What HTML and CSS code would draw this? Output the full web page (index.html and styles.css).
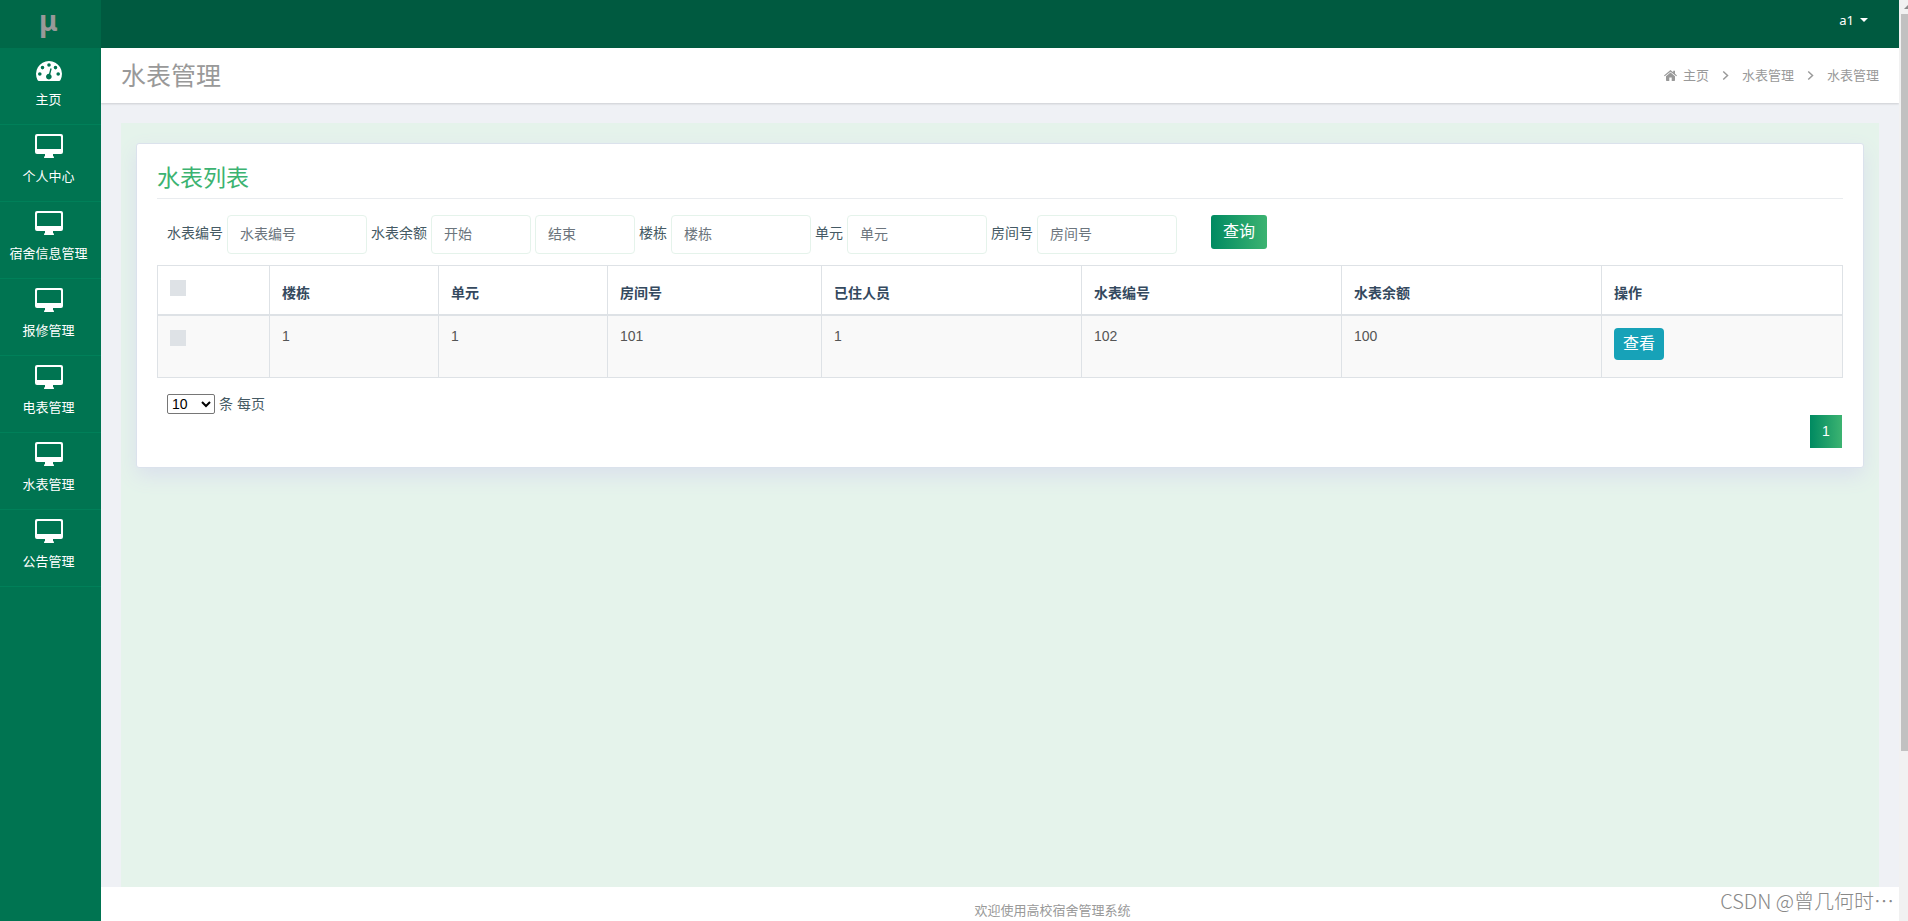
FILE: index.html
```
<!DOCTYPE html>
<html lang="zh-CN">
<head>
<meta charset="utf-8">
<title>水表管理</title>
<link rel="stylesheet" href="styles.css">
</head>
<body>
<svg class="sprite" aria-hidden="true">
  <symbol id="desktop" viewBox="0 0 28 24">
    <path fill-rule="evenodd" d="M2 0H26Q28 0 28 2V18Q28 20 26 20H18V22Q19 22 19 24H9Q9 22 10 22V20H2Q0 20 0 18V2Q0 0 2 0ZM3 2Q2 2 2 3V15H26V3Q26 2 25 2Z"/>
  </symbol>
  <symbol id="gauge" viewBox="0 0 26 20">
    <path fill-rule="evenodd" d="M13 0A13 13 0 0 1 24.500 19Q24 20 23 20H3Q2 20 1.500 19A13 13 0 0 1 13 0ZM13 2.200a1.800 1.800 0 1 0 0 3.600a1.800 1.800 0 1 0 0-3.600ZM6.500 4.800a1.800 1.800 0 1 0 0 3.600a1.800 1.800 0 1 0 0-3.600ZM19.500 4.800a1.800 1.800 0 1 0 0 3.600a1.800 1.800 0 1 0 0-3.600ZM3.800 11.200a1.800 1.800 0 1 0 0 3.600a1.800 1.800 0 1 0 0-3.600ZM22.200 11.200a1.800 1.800 0 1 0 0 3.600a1.800 1.800 0 1 0 0-3.600ZM14.400 7.300L13 12.800A2.800 2.800 0 1 0 14.300 13.200L15.700 7.700Z"/>
  </symbol>
  <symbol id="home" viewBox="0 0 13 11">
    <path d="M6.500 2.600L11 6.300V10.300Q11 11 10.300 11H7.700V7.600H5.300V11H2.700Q2 11 2 10.300V6.300Z"/>
    <path d="M6.500 0L9.200 2.300V.8H11V3.800L13 5.500L12.300 6.300L6.500 1.700L.7 6.300L0 5.500Z"/>
  </symbol>
  <symbol id="angle" viewBox="0 0 6 8">
    <path d="M1 .5L4.800 4L1 7.500" fill="none" stroke="currentColor" stroke-width="1.300"/>
  </symbol>
</svg>
<div class="app">
  <aside class="sidebar">
    <a class="logo" href="#">μ</a>
    <nav class="menu">
      <a class="item" href="#"><svg class="gauge"><use href="#gauge"/></svg><span>主页</span></a>
      <a class="item" href="#"><svg class="desktop"><use href="#desktop"/></svg><span>个人中心</span></a>
      <a class="item" href="#"><svg class="desktop"><use href="#desktop"/></svg><span>宿舍信息管理</span></a>
      <a class="item" href="#"><svg class="desktop"><use href="#desktop"/></svg><span>报修管理</span></a>
      <a class="item" href="#"><svg class="desktop"><use href="#desktop"/></svg><span>电表管理</span></a>
      <a class="item" href="#"><svg class="desktop"><use href="#desktop"/></svg><span>水表管理</span></a>
      <a class="item" href="#"><svg class="desktop"><use href="#desktop"/></svg><span>公告管理</span></a>
    </nav>
  </aside>
  <div class="page">
    <header class="topbar"><button class="user" type="button">a1<span class="caret"></span></button></header>
    <div class="heading">
      <h1>水表管理</h1>
      <nav class="crumbs">
        <a href="#"><svg class="home"><use href="#home"/></svg>主页</a>
        <svg class="angle"><use href="#angle"/></svg>
        <span>水表管理</span>
        <svg class="angle"><use href="#angle"/></svg>
        <span>水表管理</span>
      </nav>
    </div>
    <main class="main">
      <div class="panel">
        <section class="card">
          <h2>水表列表</h2>
          <form class="filters">
            <label for="number">水表编号</label><input class="field" id="number" type="text" placeholder="水表编号">
            <label for="from">水表余额</label><input class="field short" id="from" type="text" placeholder="开始">
            <input class="field short" type="text" aria-label="结束" placeholder="结束">
            <label for="building">楼栋</label><input class="field" id="building" type="text" placeholder="楼栋">
            <label for="unit">单元</label><input class="field" id="unit" type="text" placeholder="单元">
            <label for="room">房间号</label><input class="field" id="room" type="text" placeholder="房间号">
            <button class="search" type="button">查询</button>
          </form>
          <table class="grid">
            <colgroup><col class="c-check"><col class="c-small"><col class="c-small"><col class="c-room"><col class="c-wide"><col class="c-wide"><col class="c-wide"><col class="c-action"></colgroup>
            <thead>
              <tr><th><input class="check" type="checkbox" aria-label="全选"></th><th>楼栋</th><th>单元</th><th>房间号</th><th>已住人员</th><th>水表编号</th><th>水表余额</th><th>操作</th></tr>
            </thead>
            <tbody>
              <tr><td><input class="check" type="checkbox" aria-label="选择"></td><td>1</td><td>1</td><td>101</td><td>1</td><td>102</td><td>100</td><td><button class="view" type="button">查看</button></td></tr>
            </tbody>
          </table>
          <div class="sizer"><select id="size"><option>10</option><option>25</option><option>50</option></select><label for="size">条 每页</label></div>
          <nav class="pager"><a href="#">1</a></nav>
        </section>
      </div>
    </main>
    <footer class="footer">欢迎使用高校宿舍管理系统</footer>
  </div>
  <div class="scroll"><span class="arrow"></span><span class="thumb"></span></div>
</div>
<div class="mark">CSDN @曾几何时⋯</div>
</body>
</html>
```
FILE: styles.css
```
* { box-sizing: border-box; }
body {
  margin: 0;
  overflow: hidden;
  font: 14px/20px "Liberation Sans", "Noto Sans CJK SC", sans-serif;
  color: #455a64;
}
a { color: inherit; text-decoration: none; }
svg { fill: currentColor; display: block; }
button, input { font: inherit; }
button { border: 0; cursor: pointer; }
.sprite { position: absolute; width: 0; height: 0; }
.app { display: flex; height: 100vh; }

.sidebar { flex: 0 0 101px; background: #007451; color: #fff; }
.logo {
  display: flex; align-items: center; justify-content: center;
  height: 48px; padding: 0 4px 8px 0; background: #006848;
  color: #999; font: bold 28px/40px "Noto Sans", sans-serif;
}
.item {
  display: flex; flex-direction: column; align-items: center; justify-content: flex-end;
  gap: 9px; height: 77px; padding: 0 4px 14px 0;
  border-bottom: 1px solid #008059;
  font-size: 13px; white-space: nowrap;
}
.desktop { width: 28px; height: 24px; }
.gauge { width: 26px; height: 20px; }

.page { flex: 1; min-width: 0; display: flex; flex-direction: column; background: #eff1f5; }
.topbar { display: flex; justify-content: flex-end; height: 48px; padding: 10px 31px 0 0; background: #005a40; }
.user {
  display: flex; align-items: center; gap: 6px; height: 20px; padding: 0;
  background: none; color: #fff; font: 13px/20px "Noto Sans", sans-serif;
}
.caret { border: 4px solid transparent; border-top-color: #fff; border-bottom: 0; }
.heading {
  display: flex; align-items: center; justify-content: space-between;
  height: 55px; padding: 0 20px; background: #fff;
  box-shadow: 0 1px 2px rgba(0, 0, 0, .15); color: #999;
}
.heading h1 { margin: 0; font-size: 25px; line-height: 32px; font-weight: 400; }
.crumbs { display: flex; align-items: center; gap: 13px; font-size: 13px; }
.crumbs a { display: flex; align-items: center; gap: 6px; }
.home { width: 13px; height: 11px; }
.angle { width: 7px; height: 9px; }

.main { flex: 1; padding: 20px 20px 0; display: flex; }
.panel { flex: 1; min-width: 0; padding: 20px 15px; background: #e5f3eb; overflow: hidden; }
.card {
  padding: 17px 20px 19px; background: #fff;
  border: 1px solid #dbe2ec; border-radius: 3px;
  box-shadow: 0 8px 20px #dae0ec;
}
.card h2 {
  margin: 0 0 16px; padding-bottom: 2px; border-bottom: 1px solid #e9ecef;
  color: #3cb371; font-size: 23px; line-height: 35px; font-weight: 400;
}
.filters { display: flex; align-items: flex-start; gap: 4px; padding-left: 10px; margin-bottom: 11px; }
.filters label { padding-top: 8px; white-space: nowrap; }
.field {
  width: 140px; height: 39px; min-width: 0; padding: 0 12px 2px;
  border: 1px solid #e5f3eb; border-radius: 4px; background: #fff; color: #455a64;
}
.field::placeholder { color: #6c757d; }
.short { width: 100px; }
.search {
  width: 56px; height: 34px; margin-left: 30px; padding: 0; border-radius: 3px;
  background: linear-gradient(to right, #008a61, #3cb371); color: #fff; font-size: 16px;
}
.grid { width: 100%; table-layout: fixed; border-collapse: collapse; }
.c-check { width: 112px; }
.c-small { width: 169px; }
.c-room { width: 214px; }
.c-wide { width: 260px; }
.c-action { width: 241px; }
.grid th, .grid td { border: 1px solid #dee2e6; padding: 10px 12px; text-align: left; vertical-align: top; }
.grid th { height: 49px; padding-top: 17px; border-bottom-width: 2px; font-weight: 600; color: #34495e; }
.grid td { height: 63px; background: #f9f9f9; color: #555; }
.grid td:last-child { padding-top: 12px; }
.grid th:first-child, .grid td:first-child { padding-top: 14px; }
.check { appearance: none; display: block; width: 16px; height: 16px; margin: 0; background: #dee2e6; }
.view { width: 50px; height: 32px; padding: 0; border-radius: 4px; background: #17a2b8; color: #fff; font-size: 16px; display: block; }
.sizer { display: flex; align-items: center; gap: 4px; padding: 16px 10px 1px; }
.sizer select { width: 48px; height: 20px; padding: 0; font: 14px "Liberation Sans", sans-serif; background: #fff; color: #000; border: 1px solid #767676; border-radius: 2px; }
.pager { display: flex; justify-content: flex-end; padding-right: 1px; }
.pager a {
  width: 32px; height: 33px; line-height: 33px; text-align: center; color: #fff;
  background: linear-gradient(to right, #008a61, #3cb371);
}
.footer { height: 34px; padding: 14px 0 0 105px; overflow: hidden; background: #fff; color: #999; font-size: 13px; text-align: center; white-space: nowrap; }
.scroll { flex: 0 0 9px; display: flex; flex-direction: column; align-items: flex-end; background: #f1f1f1; overflow: hidden; }
.arrow { margin: 5px 0 5px; border-left: 4px solid transparent; border-bottom: 4px solid #8b8b8b; }
.thumb { width: 7px; height: 80%; background: #c1c1c1; }
.mark {
  position: absolute; right: 14px; bottom: 6px; color: #888;
  font: 300 20px/28px "Noto Sans CJK SC", sans-serif; white-space: nowrap;
}
```
